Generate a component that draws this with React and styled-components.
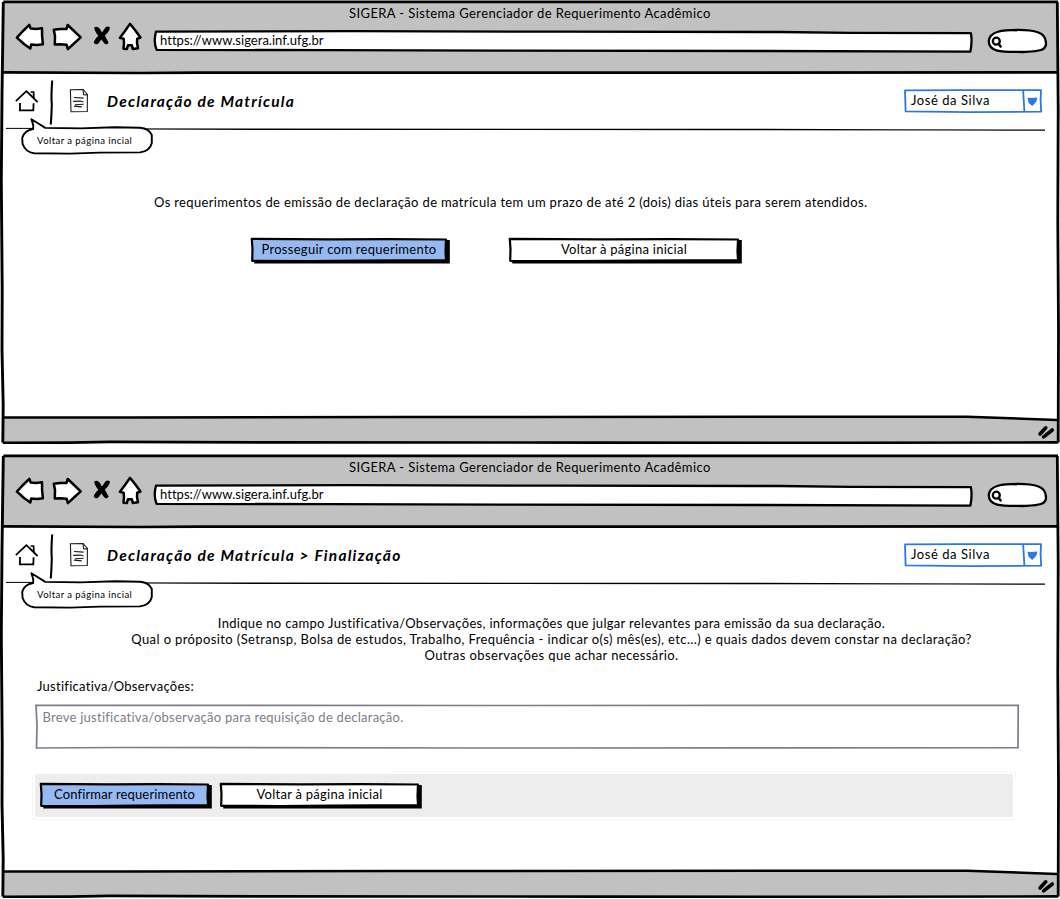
import React from 'react';
import styled, { createGlobalStyle } from 'styled-components';

const GlobalStyle = createGlobalStyle`
  *, *::before, *::after { box-sizing: border-box; }
  body { margin: 0; background: #fff; overflow: hidden; }
  svg { display: block; overflow: visible; }
`;

const Board = styled.main`
  display: flex;
  flex-direction: column;
  gap: 10px;
  width: 1060px;
  height: 899px;
  color: #000;
  font-family: Lato, "Open Sans", sans-serif;
  font-size: 13px;
  line-height: 16px;
`;

const Window = styled.section`
  position: relative;
  display: flex;
  flex-direction: column;
  height: 444px;
  flex: none;
  padding: 2px 2px 2px 3px;
`;

const WindowOutline = styled.svg`
  position: absolute;
  left: 0;
  top: 0;
  pointer-events: none;
`;

const Chrome = styled.header`
  display: flex;
  flex-direction: column;
  height: 71px;
  flex: none;
  background: #c1c1c1;
`;

const Text = styled.span`
  white-space: nowrap;
  letter-spacing: ${(p) => p.$track || 0}px;
`;

const WindowTitle = styled(Text)`
  padding: 3px 0 0 346px;
  height: 20px;
`;

const NavRow = styled.div`
  display: flex;
  align-items: flex-start;
  padding-left: 12px;
`;

const NavIcons = styled.svg`
  flex: none;
  margin-right: 10px;
`;

const SketchBox = styled.div`
  position: relative;
  flex: none;
  width: ${(p) => p.$w}px;
  height: ${(p) => p.$h}px;
  > svg { position: absolute; left: 0; top: 0; }
  > ${Text} { position: relative; }
`;

const AddressBar = styled(SketchBox)`
  margin-top: 8px;
  padding: 2px 0 0 7px;
`;

const SearchBox = styled(SketchBox)`
  margin: 6px 0 0 14px;
`;

const AppBar = styled.div`
  position: relative;
  display: flex;
  align-items: flex-start;
  height: 57px;
  flex: none;
  padding: 7px 16px 0 12px;
`;

const Rule = styled.svg`
  position: absolute;
  left: 3px;
  bottom: -1px;
`;

const HomeIcon = styled.svg`
  margin-top: 8px;
`;

const Divider = styled.svg`
  margin-left: 9px;
`;

const DocIcon = styled.svg`
  margin: 8px 0 0 15px;
`;

const PageTitle = styled.h1`
  margin: 11px auto 0 18px;
  font-size: 15.5px;
  line-height: 20px;
  font-weight: 700;
  font-style: italic;
  letter-spacing: 1.22px;
  white-space: nowrap;
`;

const Select = styled(SketchBox)`
  margin-top: 9px;
  padding: 3px 0 0 7px;
`;

const Tooltip = styled.div`
  position: absolute;
  left: 18px;
  top: 44px;
  width: 133px;
  height: 38px;
  padding: 18px 0 0 16px;
  font-size: 9.5px;
  line-height: 12px;
  z-index: 1;
  > svg { position: absolute; left: 0; top: 0; }
  > ${Text} { position: relative; }
`;

const Content = styled.div`
  flex: 1;
  display: flex;
  flex-direction: column;
`;

const Footer = styled.footer`
  flex: none;
  height: 25px;
  background: #c1c1c1;
  clip-path: polygon(0 0, 91% 0, 100% 3px, 100% 100%, 0 100%);
  display: flex;
  justify-content: flex-end;
  align-items: flex-start;
  padding: 8px 3px 0 0;
`;

const Notice = styled.p`
  margin: 64px 0 0 151px;
  display: flex;
`;

const Actions = styled.div`
  display: flex;
  gap: ${(p) => p.$gap}px;
  margin: 27px 0 0 247px;
`;

const Toolbar = styled.div`
  position: relative;
  display: flex;
  gap: 7px;
  width: 978px;
  height: 43px;
  margin: 25px 0 0 32px;
  padding: 8px 0 0 4px;
  background: #ededed;
`;

const ToolbarEdge = styled.svg`
  position: absolute;
  left: -3px;
  top: -3px;
`;

const ButtonBox = styled.button`
  position: relative;
  width: ${(p) => p.$w}px;
  height: 27px;
  padding: 1px 2px 4px 0;
  border: 0;
  background: none;
  color: inherit;
  font: inherit;
  text-align: center;
  > svg { position: absolute; left: 0; top: 0; }
  > ${Text} { position: relative; }
`;

const Instructions = styled.div`
  display: flex;
  flex-direction: column;
  align-items: center;
  width: 842px;
  margin: 31px 0 0 127.5px;
`;

const FieldLabel = styled.label`
  display: flex;
  margin: 15px 0 0 34px;
`;

const FieldBox = styled(SketchBox)`
  margin: 10px 0 0 32px;
  padding: 5px 0 0 7.5px;
  color: #7d7d89;
`;

function SketchButton({ w, fill, track, children }) {
  const r = w - 4;
  return (
    <ButtonBox $w={w} type="button">
      <svg width={w} height="27">
        <path d={`M4 5 L${r} 3 H${w - 0.2} V26.6 H4.3 Z`} fill="#000" />
        <path
          d={`M1.8 1.8 L${w * 0.4} 2.4 L${w * 0.7} 2.1 L${r} 2.5 L${r - 0.5} 14 L${r} 23 L${w * 0.55} 23.6 L${w * 0.3} 24 L2.2 23.8 L2.5 12 Z`}
          fill={fill}
          stroke="#000"
          strokeWidth="2.2"
          strokeLinejoin="round"
        />
      </svg>
      <Text $track={track}>{children}</Text>
    </ButtonBox>
  );
}

function BrowserWindow({ pageTitle, children }) {
  return (
    <Window>
      <Chrome>
        <WindowTitle $track={0.4}>SIGERA - Sistema Gerenciador de Requerimento Acadêmico</WindowTitle>
        <NavRow>
          <NavIcons width="128" height="30" viewBox="15 22 128 30" fill="#fff" stroke="#000" strokeWidth="2.5" strokeLinejoin="round">
            <path d="M16.9 37.6 L22.5 31.5 L29.3 24.8 L30.7 28.6 L36 28.9 L42 28.2 L42.1 36 L42.9 44.3 L37 44.9 L31.2 44.6 L30.3 48.6 L24 44 Z" />
            <path d="M53.8 29.7 L60 28.9 L66.4 29.1 L67.7 25 L74 31 L80.7 37.4 L74.5 43 L67.9 49.2 L66.6 44.8 L60 44.2 L54.8 44.5 L55 36 Z" />
            <path d="M94.2 27.4 Q97 25.6 99.6 28.6 L102 32.6 L105.4 27.4 Q108 25.4 110 27.6 Q109.6 31.6 104.8 35.4 L108.6 42.6 Q107.6 45.6 104.4 43.4 L101.4 39.6 L98.4 43.4 Q95.2 45.4 93.8 42.8 Q94.2 39.6 98.4 35.8 Q94.4 31 94.2 27.4 Z" fill="#000" stroke="none" />
            <path d="M130 23.9 L135 30 L140.5 37.6 L137.2 38.7 L137 43 L138 48.2 L132.8 48.9 L131.8 45.2 L128 45.2 L126.8 49 L123.5 48.7 L124 43 L123.7 38.8 L119.8 37.9 L125 31 Z" />
          </NavIcons>
          <AddressBar $w={820} $h={24}>
            <svg width="820" height="24" viewBox="153 30 820 24">
              <path
                d="M156 31.6 L350 31.2 L560 31.7 L780 32 L850 32.8 L970.9 33.2 Q972.4 41 970.4 51.6 L760 51 L500 50.6 L330 50.2 L156.6 49.8 Q153.2 42 156 31.6 Z"
                fill="#fff" stroke="#000" strokeWidth="2.3" strokeLinejoin="round"
              />
            </svg>
            <Text $track={0.033}>https://www.sigera.inf.ufg.br</Text>
          </AddressBar>
          <SearchBox $w={60} $h={26}>
            <svg width="60" height="26" viewBox="987 28 60 26" stroke="#000" strokeLinecap="round">
              <path d="M988.8 41 C989.5 31 1003 30 1018 29.9 C1034 30 1045.7 32 1045.8 42 C1047.8 51.5 1036 51.3 1023 52 C1008 51.6 988.5 54 988.8 41 Z" fill="#fff" strokeWidth="2.3" />
              <circle cx="996.3" cy="41.2" r="3.5" fill="#fff" strokeWidth="2.3" />
              <path d="M998.6 43.8 L1000.6 46.4" fill="none" strokeWidth="2.5" />
            </svg>
          </SearchBox>
        </NavRow>
      </Chrome>
      <AppBar>
        <Rule width="1040" height="4" viewBox="6 127 1040 4">
          <path d="M6 128.4 H80" stroke="#000" strokeWidth="1" fill="none" />
          <path d="M30 128.2 L250 128.4 L560 128.8 L740 128.8 L890 129.2 L1045 129.6 V130.8 L950 130.4 L740 130.2 L300 130 L140 129.6 L30 129 Z" fill="#000" />
        </Rule>
        <HomeIcon width="24" height="24" viewBox="15 88 24 24" fill="none" stroke="#000" strokeWidth="1.8">
          <path d="M15.9 101.2 L20 97.2 L26.4 91.2 L32 96.5 L37.6 102.2" />
          <path d="M30.6 92 H33.6 L33.9 98.6" strokeWidth="1.7" />
          <path d="M20 103 L19.9 110.4 L33.3 110.3 L33.6 103.2" />
        </HomeIcon>
        <Divider width="6" height="46" viewBox="48 79.5 6 46">
          <path d="M52.2 80 Q51 96 51.8 104 Q51.5 115 50.8 124" fill="none" stroke="#000" strokeWidth="2.1" />
        </Divider>
        <DocIcon width="20" height="25" viewBox="69 88.5 20 25" fill="none" stroke="#1a1a1a" strokeWidth="1.1">
          <path d="M70.4 90.2 L83 90 L87.4 95 L87.3 112 L71 112.3 Z" />
          <path d="M83 90 L83.6 95.2 L87.4 95.4" />
          <path d="M74 98 L83.6 98.6 M73.2 101.9 L80.5 101.6 L83.6 102.6 M75 105.2 L83.6 104.8 M74 106.6 L81.8 107.4" />
        </DocIcon>
        <PageTitle>{pageTitle}</PageTitle>
        <Select $w={138} $h={24}>
          <svg width="138" height="24" viewBox="904 89 138 24" fill="none" stroke="#2b78e4" strokeWidth="1.8" strokeLinejoin="round">
            <path d="M905 90.4 L960 90.2 L1041 90.2 L1040.6 100 L1041.2 111.6 L970 112.2 L905.6 111.4 Z" />
            <path d="M1023.2 91 L1024.4 111.5" />
            <path d="M1028.2 98.3 L1032 98.6 L1036.6 98.1 L1035.8 101.4 L1032.3 105.2 L1029.2 102.5 Z" fill="#2b78e4" strokeWidth="1.2" />
          </svg>
          <Text $track={0.56}>José da Silva</Text>
        </Select>
        <Tooltip>
          <svg width="133" height="38" viewBox="21 117 133 38">
            <path
              d="M33.2 129 L33.2 125 L31.4 119.2 Q37 122.5 45.2 127.9 L80 128.4 L115 127.2 L140 127.8 Q149 128.6 151.8 135 L151.8 143 Q150 151 140 152.4 L100 152.6 L70 153.6 L34 153.3 Q25.5 152 22.6 144 L22.2 138 Q24 130.6 33.2 129 Z"
              fill="#fff" stroke="#000" strokeWidth="1.9" strokeLinejoin="round"
            />
          </svg>
          <Text $track={0.448}>Voltar a página incial</Text>
        </Tooltip>
      </AppBar>
      <Content>{children}</Content>
      <Footer>
        <svg width="18" height="16" viewBox="1037 425 18 16" fill="none" stroke="#000" strokeLinecap="round" strokeWidth="3.6">
          <path d="M1040 434 L1045.8 427.8 M1043.6 436.8 L1052.3 430" />
        </svg>
      </Footer>
      <WindowOutline width="1060" height="444" fill="none" stroke="#000" strokeLinejoin="round">
        <path d="M3.3 1.9 L1058 1.9" strokeWidth="2.9" />
        <path d="M1057.3 1.9 L1058.2 110 L1057.8 220 L1058.5 330 L1058.2 442.5" strokeWidth="2.8" />
        <path d="M3.3 1.9 L2 95 L1.3 180 L2.2 290 L2 350 L3.2 405 L2.8 442.6" strokeWidth="2.9" />
        <path d="M2.8 442.7 L70 442.6 L110 441.9 L260 442.4 L600 442.6 L860 442.8 L1058.2 442.4" strokeWidth="2.6" />
        <path d="M3 72.3 L140 73 L200 72.7 L600 72.6 L1057 72.4" strokeWidth="2.7" />
        <path d="M3 417.4 L130 417.6 L400 417 L820 416.7 L967 416.8 L1057 419.9" strokeWidth="2.5" />
      </WindowOutline>
    </Window>
  );
}

export default function App() {
  return (
    <>
      <GlobalStyle />
      <Board>
        <BrowserWindow pageTitle="Declaração de Matrícula">
          <Notice>
            <Text $track={0.348}>
              Os requerimentos de emissão de declaração de matrícula tem um prazo de até 2 (dois) dias úteis para serem atendidos.
            </Text>
          </Notice>
          <Actions $gap={58}>
            <SketchButton w={200} fill="#95baf3" track={0.285}>Prosseguir com requerimento</SketchButton>
            <SketchButton w={234} fill="#fff" track={0.261}>Voltar à página inicial</SketchButton>
          </Actions>
        </BrowserWindow>
        <BrowserWindow pageTitle="Declaração de Matrícula &gt; Finalização">
          <Instructions>
            <Text $track={0.317}>
              Indique no campo Justificativa/Observações, informações que julgar relevantes para emissão da sua declaração.
            </Text>
            <Text $track={0.383}>
              Qual o próposito (Setransp, Bolsa de estudos, Trabalho, Frequência - indicar o(s) mês(es), etc...) e quais dados devem constar na declaração?
            </Text>
            <Text $track={0.392}>Outras observações que achar necessário.</Text>
          </Instructions>
          <FieldLabel>
            <Text $track={0.278}>Justificativa/Observações:</Text>
          </FieldLabel>
          <FieldBox $w={985} $h={45}>
            <svg width="985" height="45" viewBox="35 704 985 45">
              <path d="M36 705.3 L500 705.5 L1018.2 705.3 L1018 747.6 L480 748 L120 747.5 L36.5 748 L37 725 Z" fill="#fff" stroke="#7d7d89" strokeWidth="1.7" />
            </svg>
            <Text $track={0.256}>Breve justificativa/observação para requisição de declaração.</Text>
          </FieldBox>
          <Toolbar>
            <ToolbarEdge width="984" height="49" fill="none" stroke="#f5f5f5">
              <path d="M0.5 4 V48.5 H983 M360 1 H983.5 V8" />
            </ToolbarEdge>
            <SketchButton w={173} fill="#95baf3" track={0.155}>Confirmar requerimento</SketchButton>
            <SketchButton w={203} fill="#fff" track={0.261}>Voltar à página inicial</SketchButton>
          </Toolbar>
        </BrowserWindow>
      </Board>
    </>
  );
}
